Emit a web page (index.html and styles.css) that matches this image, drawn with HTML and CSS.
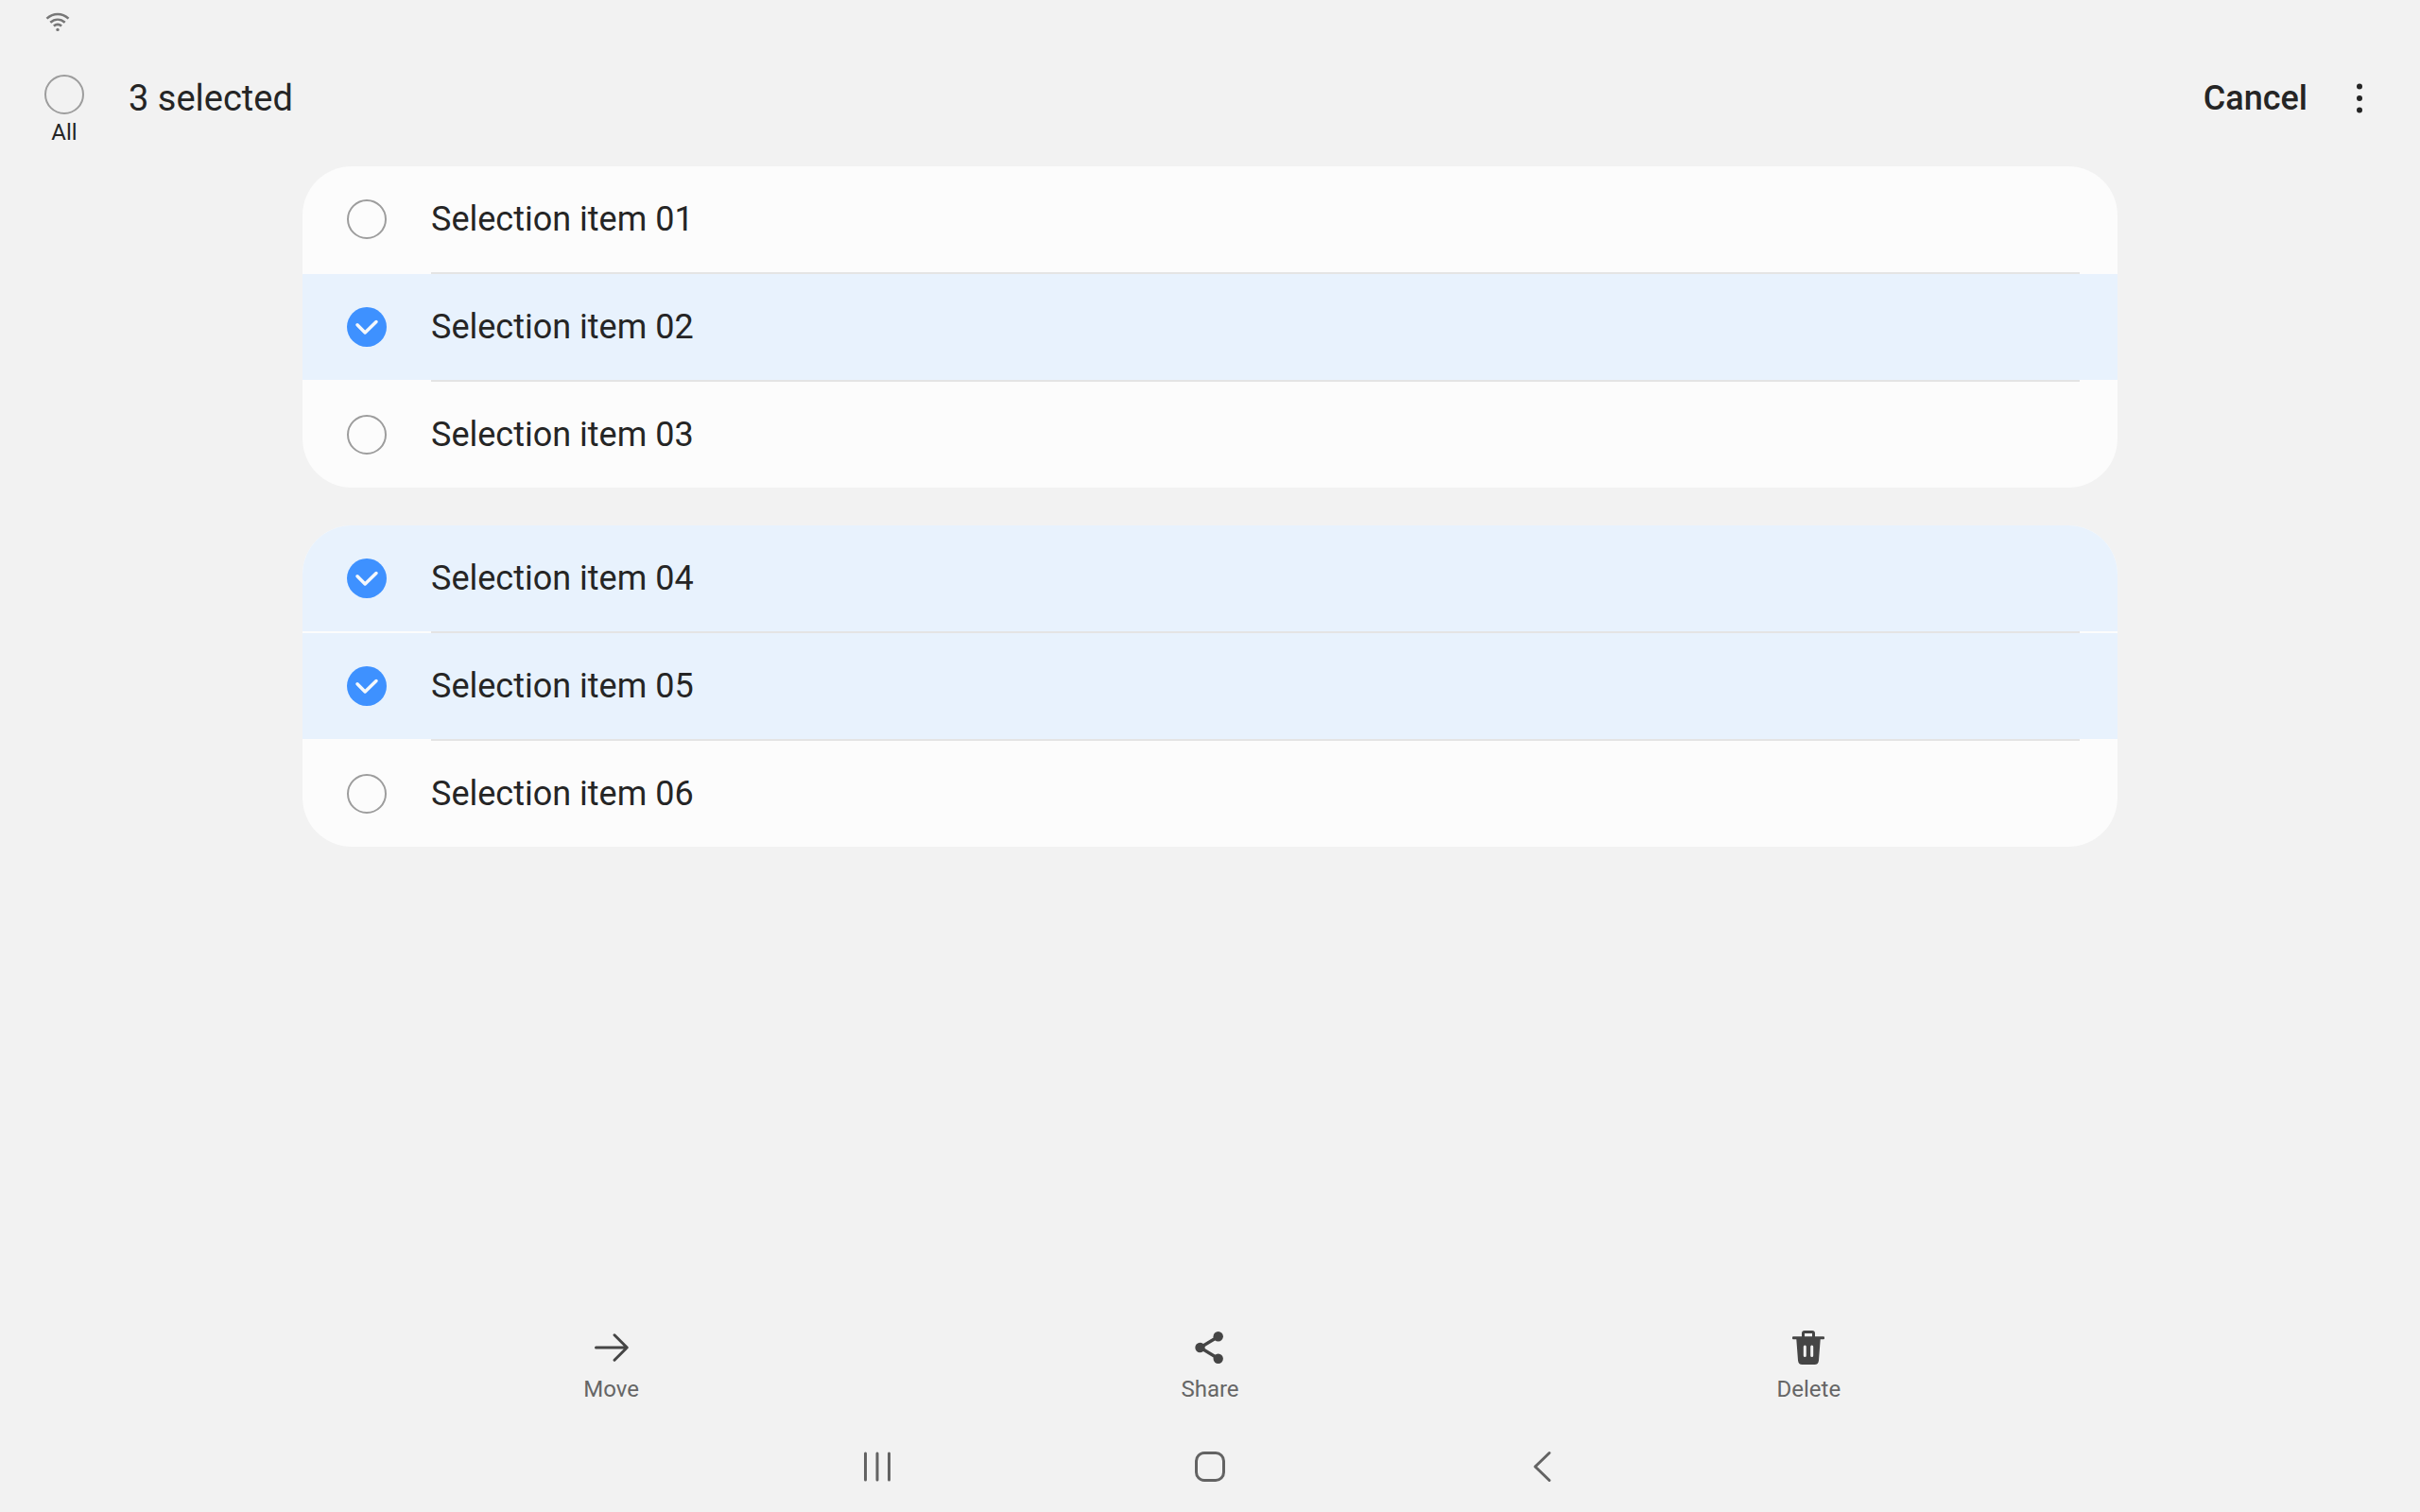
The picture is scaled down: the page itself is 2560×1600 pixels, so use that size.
FILE: index.html
```html
<!DOCTYPE html>
<html lang="en">
<head>
<meta charset="utf-8">
<title>3 selected</title>
<link rel="stylesheet" href="styles.css">
</head>
<body>
<div class="status-bar">
  <svg class="wifi" viewBox="0 0 28 24" aria-hidden="true">
    <path d="M2.5 7.6C9.400 1.500 18.600 1.500 25.500 7.600M6.300 11.800C11 7.700 17 7.700 21.700 11.800M9.900 15.600C12.500 13.400 15.500 13.400 18.100 15.600"/>
    <circle cx="14" cy="19.400" r="1.700"/>
  </svg>
</div>

<header class="app-bar">
  <label class="select-all">
    <span class="tick"><input type="checkbox"></span>
    <span>All</span>
  </label>
  <h1 class="title">3 selected</h1>
  <button class="cancel" type="button">Cancel</button>
  <button class="more" type="button" aria-label="More options">
    <svg viewBox="0 0 40 50" aria-hidden="true"><circle cx="20" cy="12.500" r="3"/><circle cx="20" cy="25" r="3"/><circle cx="20" cy="37.500" r="3"/></svg>
  </button>
</header>

<main class="lists">
  <ul class="card">
    <li><label class="row"><span class="tick"><input type="checkbox"><svg viewBox="0 0 42 42" aria-hidden="true"><path d="M11 18.800L19.200 27L31 15.500"/></svg></span><span>Selection item 01</span></label></li>
    <li><label class="row"><span class="tick"><input type="checkbox" checked><svg viewBox="0 0 42 42" aria-hidden="true"><path d="M11 18.800L19.200 27L31 15.500"/></svg></span><span>Selection item 02</span></label></li>
    <li><label class="row"><span class="tick"><input type="checkbox"><svg viewBox="0 0 42 42" aria-hidden="true"><path d="M11 18.800L19.200 27L31 15.500"/></svg></span><span>Selection item 03</span></label></li>
  </ul>
  <ul class="card">
    <li><label class="row"><span class="tick"><input type="checkbox" checked><svg viewBox="0 0 42 42" aria-hidden="true"><path d="M11 18.800L19.200 27L31 15.500"/></svg></span><span>Selection item 04</span></label></li>
    <li><label class="row"><span class="tick"><input type="checkbox" checked><svg viewBox="0 0 42 42" aria-hidden="true"><path d="M11 18.800L19.200 27L31 15.500"/></svg></span><span>Selection item 05</span></label></li>
    <li><label class="row"><span class="tick"><input type="checkbox"><svg viewBox="0 0 42 42" aria-hidden="true"><path d="M11 18.800L19.200 27L31 15.500"/></svg></span><span>Selection item 06</span></label></li>
  </ul>
</main>

<div class="toolbar" role="toolbar" aria-label="Actions">
  <button type="button">
    <svg viewBox="0 0 48 48" aria-hidden="true"><path class="line" d="M7.500 24H40M27 10.800L40.300 24L27 37.200"/></svg>
    Move
  </button>
  <button type="button">
    <svg viewBox="0 0 48 48" aria-hidden="true"><path class="link" d="M33 12.300L13.500 24L33 35.700"/><circle cx="13.500" cy="24" r="5.200"/><circle cx="32.700" cy="12.300" r="5.200"/><circle cx="32.700" cy="35.700" r="5.200"/></svg>
    Share
  </button>
  <button type="button">
    <svg viewBox="3 0 48 48" aria-hidden="true"><path fill-rule="evenodd" d="M20 9Q20 6 23 6H31Q34 6 34 9V12.300H43Q44 12.300 44 13.300V14.200Q44 15.200 43 15.200H39.700L38 37.500Q37.600 42 33.500 42H20.500Q16.400 42 16 37.500L14.300 15.200H11Q10 15.200 10 14.200V13.300Q10 12.300 11 12.300H20ZM23 9V12.300H31V9ZM21.800 23V32.500Q21.800 34 23.300 34Q24.800 34 24.800 32.500V23Q24.800 21.500 23.300 21.500Q21.800 21.500 21.800 23ZM29.200 23V32.500Q29.200 34 30.700 34Q32.200 34 32.200 32.500V23Q32.200 21.500 30.700 21.500Q29.200 21.500 29.200 23Z"/></svg>
    Delete
  </button>
</div>

<nav class="nav-bar" aria-label="System">
  <button type="button" aria-label="Recents"><svg viewBox="0 0 48 48" aria-hidden="true"><path d="M11.500 10V38M24 10V38M36.500 10V38"/></svg></button>
  <button type="button" aria-label="Home"><svg viewBox="0 0 48 48" aria-hidden="true"><rect x="9.500" y="9.500" width="29" height="29" rx="8.500"/></svg></button>
  <button type="button" aria-label="Back"><svg viewBox="0 0 48 48" aria-hidden="true"><path d="M31 9.500L16 24L31 38.500"/></svg></button>
</nav>
</body>
</html>
```
FILE: styles.css
```css
* {
  box-sizing: border-box;
}

body {
  margin: 0;
  min-height: 100vh;
  display: flex;
  flex-direction: column;
  background: #f2f2f2;
  color: #252525;
  font-family: Roboto, "Liberation Sans", sans-serif;
  font-size: 36px;
}

button {
  border: 0;
  padding: 0;
  background: none;
  color: inherit;
  font: inherit;
  cursor: pointer;
}

svg {
  display: block;
}

.status-bar {
  height: 48px;
  padding: 12px 47px;
}

.wifi {
  width: 28px;
  height: 24px;
  fill: #777;
}

.wifi path {
  fill: none;
  stroke: #777;
  stroke-width: 2.600;
}

.app-bar {
  display: flex;
  align-items: flex-start;
  min-height: 128px;
  padding: 31px 44px 0 47px;
  line-height: 50px;
}

.select-all {
  display: flex;
  flex-direction: column;
  align-items: center;
  gap: 5px;
  width: 42px;
  margin-right: 47px;
  font-size: 24px;
  line-height: 28px;
}

.title {
  flex: 1;
  margin: 0;
  font-size: 38px;
  font-weight: 400;
}

.cancel {
  margin-right: 35px;
  font-weight: 500;
}

.more {
  width: 40px;
  height: 50px;
  fill: #252525;
}

.tick {
  display: grid;
  width: 42px;
  height: 42px;
}

.tick > * {
  grid-area: 1 / 1;
}

.tick input {
  appearance: none;
  width: 42px;
  height: 42px;
  margin: 0;
  border: 2px solid #9d9d9d;
  border-radius: 50%;
}

.tick input:checked {
  border: 0;
  background: #3e91ff;
}

.tick svg {
  visibility: hidden;
  fill: none;
  stroke: #f4f8fc;
  stroke-width: 3.500;
  stroke-linecap: round;
  stroke-linejoin: round;
}

.tick input:checked + svg {
  visibility: visible;
}

.lists {
  flex: 1;
  display: flex;
  flex-direction: column;
  gap: 40px;
  width: 75%;
  margin: 0 auto;
}

.card {
  margin: 0;
  padding: 0;
  overflow: hidden;
  border-radius: 52px;
  background: #fcfcfc;
  list-style: none;
}

.card li + li::before {
  content: "";
  display: block;
  height: 2px;
  margin: 0 40px 0 136px;
  background: #e4e4e4;
}

.row {
  display: flex;
  align-items: center;
  gap: 47px;
  height: 112px;
  padding: 0 47px;
}

.row:has(input:checked) {
  background: #e8f2fd;
}

.toolbar {
  display: flex;
  width: 100%;
  max-width: 1900px;
  margin: 0 auto;
  padding-bottom: 20px;
  color: #666;
  font-size: 24px;
  line-height: 28px;
}

.toolbar button {
  flex: 1;
  display: flex;
  flex-direction: column;
  align-items: center;
  gap: 6px;
}

.toolbar svg {
  width: 48px;
  height: 48px;
  fill: #454545;
}

.toolbar .line,
.toolbar .link {
  fill: none;
  stroke: #454545;
  stroke-width: 3;
  stroke-linecap: round;
  stroke-linejoin: round;
}

.toolbar .link {
  stroke-width: 3.500;
}

.nav-bar {
  display: flex;
  justify-content: center;
  height: 96px;
}

.nav-bar button {
  display: grid;
  place-items: center;
  width: 352px;
}

.nav-bar svg {
  width: 48px;
  height: 48px;
  fill: none;
  stroke: #636363;
  stroke-width: 3;
  stroke-linecap: round;
  stroke-linejoin: round;
}
```
